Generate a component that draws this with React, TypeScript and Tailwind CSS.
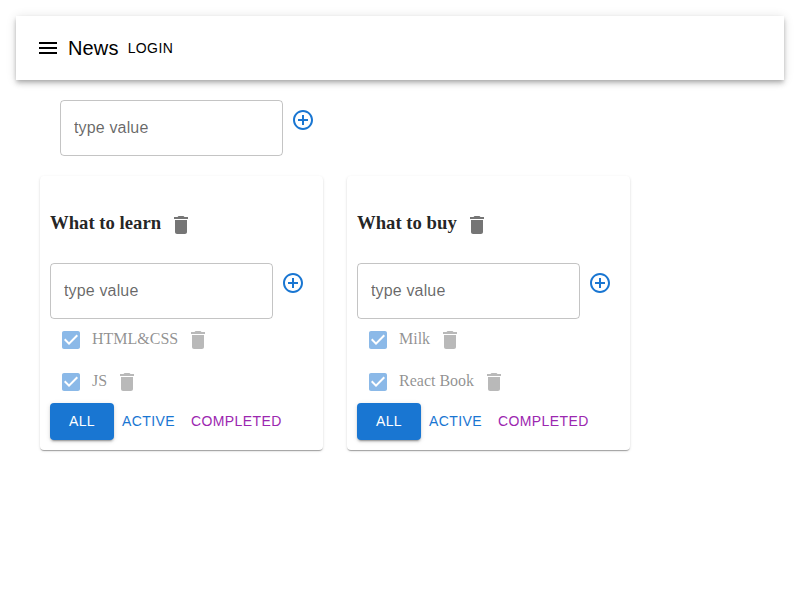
import React from "react";

const sans = "font-['Liberation_Sans',Arial,sans-serif]";

function TrashIcon() {
  return (
    <svg viewBox="0 0 24 24" className="h-6 w-6 shrink-0 fill-black/54">
      <path d="M6 19c0 1.1.9 2 2 2h8c1.1 0 2-.9 2-2V7H6v12zM19 4h-3.5l-1-1h-5l-1 1H5v2h14V4z" />
    </svg>
  );
}

function AddItem() {
  return (
    <div className="flex h-14 items-start">
      <input
        placeholder="type value"
        className={`${sans} h-14 w-[223px] rounded border border-black/23 px-[13px] text-base tracking-[0.15px] text-black/87 outline-none placeholder:text-black/60`}
      />
      <button className="ml-2 mt-2 h-6 w-6">
        <svg viewBox="0 0 24 24" className="h-6 w-6 fill-[#1976d2]">
          <path d="M13 7h-2v4H7v2h4v4h2v-4h4v-2h-4V7zm-1-5C6.48 2 2 6.48 2 12s4.48 10 10 10 10-4.48 10-10S17.52 2 12 2zm0 18c-4.41 0-8-3.59-8-8s3.59-8 8-8 8 3.59 8 8-3.59 8-8 8z" />
        </svg>
      </button>
    </div>
  );
}

function Task({ title }: { title: string }) {
  return (
    <div className="flex h-[42px] items-center pl-[9px] opacity-50">
      <svg viewBox="0 0 24 24" className="h-6 w-6 shrink-0 fill-[#1976d2]">
        <path d="M19 3H5c-1.11 0-2 .9-2 2v14c0 1.1.89 2 2 2h14c1.11 0 2-.9 2-2V5c0-1.1-.89-2-2-2zm-9 14l-5-5 1.41-1.41L10 14.17l7.59-7.59L19 8l-9 9z" />
      </svg>
      <span className="ml-[9px] mr-2 pb-0.5">{title}</span>
      <TrashIcon />
    </div>
  );
}

function TodoList({ title, tasks }: { title: string; tasks: string[] }) {
  return (
    <section className="h-[274px] w-[283px] rounded bg-white p-2.5 text-black/87 shadow-[0px_2px_1px_-1px_rgba(0,0,0,0.2),0px_1px_1px_0px_rgba(0,0,0,0.14),0px_1px_3px_0px_rgba(0,0,0,0.12)]">
      <h3 className="mt-[27px] flex h-6 items-center text-[18.72px] leading-5 font-bold">
        <span className="mr-2 pb-1">{title}</span>
        <TrashIcon />
      </h3>
      <div className="mt-[26px]">
        <AddItem />
      </div>
      {tasks.map((t) => (
        <Task key={t} title={t} />
      ))}
      <div className={`${sans} flex h-[37px] text-sm tracking-[0.4px]`}>
        <button className="w-16 rounded bg-[#1976d2] pb-0.5 text-white shadow-[0px_3px_1px_-2px_rgba(0,0,0,0.2),0px_2px_2px_0px_rgba(0,0,0,0.14),0px_1px_5px_0px_rgba(0,0,0,0.12)]">
          ALL
        </button>
        <button className="px-2 pb-0.5 text-[#1976d2]">ACTIVE</button>
        <button className="px-2 pb-0.5 text-[#9c27b0]">COMPLETED</button>
      </div>
    </section>
  );
}

export default function App() {
  return (
    <div className="h-[600px] bg-white p-4 font-['Liberation_Serif','Times_New_Roman',serif]">
      <header
        className={`${sans} flex h-16 items-center bg-white px-5 text-black shadow-[0px_2px_4px_-1px_rgba(0,0,0,0.2),0px_4px_5px_0px_rgba(0,0,0,0.14),0px_1px_10px_0px_rgba(0,0,0,0.12)]`}
      >
        <svg viewBox="0 0 24 24" className="h-6 w-6 fill-black">
          <path d="M3 18h18v-2H3v2zm0-5h18v-2H3v2zm0-7v2h18V6H3z" />
        </svg>
        <h1 className="ml-2 text-xl font-medium tracking-[0.15px]">News</h1>
        <button className="px-[9px] text-sm tracking-[0.4px]">LOGIN</button>
      </header>
      <main className="px-6 pt-5">
        <div className="pl-5">
          <AddItem />
        </div>
        <div className="mt-5 flex gap-6">
          <TodoList title="What to learn" tasks={["HTML&CSS", "JS"]} />
          <TodoList title="What to buy" tasks={["Milk", "React Book"]} />
        </div>
      </main>
    </div>
  );
}
